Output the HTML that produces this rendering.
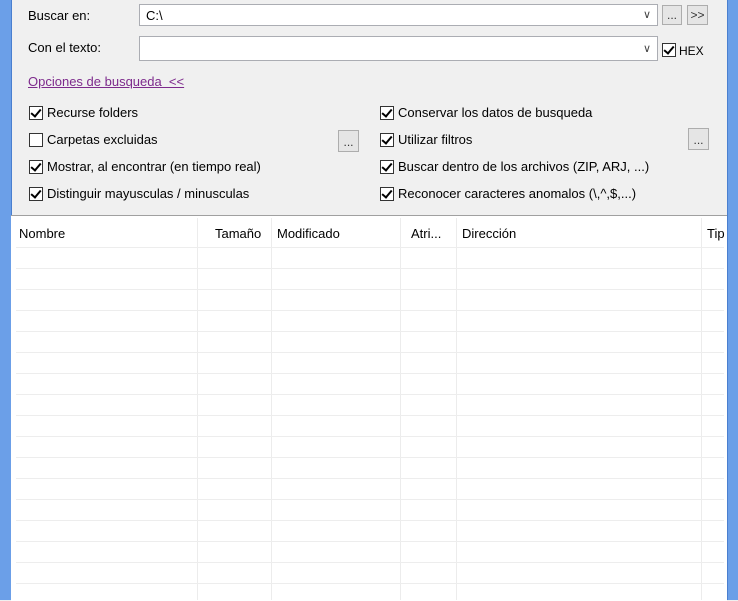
<!DOCTYPE html>
<html><head><style>
body{margin:0;width:738px;height:600px;overflow:hidden;background:#f0f0f0;font-family:"Liberation Sans",Arial,sans-serif;font-size:13px;color:#000;position:relative}
.a{position:absolute}
.lb{left:0;top:0;width:11px;height:600px;background:#6b9fe8;border-right:1px solid #4a7fcf}
.rb{left:727px;top:0;width:11px;height:600px;background:#6b9fe8;border-left:1px solid #4a7fcf}
.inp{background:#fff;border:1px solid #abadb3;height:22px;box-sizing:border-box}
.btn{border:1px solid #adadad;background:#e5e5e5;box-sizing:border-box;font-size:12px;text-align:center;line-height:18px;color:#333}
.cb{width:14px;height:14px;border:1px solid #333;background:#fff;box-sizing:border-box}
.cb.c::after{content:"";position:absolute;left:3px;top:0px;width:4px;height:8px;border:solid #000;border-width:0 2px 2px 0;transform:rotate(40deg)}
.chev{font-size:11px;color:#444}
.hl{height:1px;background:#ededed;left:16px;width:708px}
.vl{width:1px;background:#ececec;top:218px;height:382px}
</style></head><body>
<div class="a lb"></div><div class="a rb"></div>
<div class="a" style="left:28px;top:8px">Buscar en:</div>
<div class="a inp" style="left:139px;top:4px;width:519px;padding:3px 6px">C:\</div>
<div class="a chev" style="left:643px;top:8px">&#8744;</div>
<div class="a btn" style="left:662px;top:5px;width:20px;height:20px">...</div>
<div class="a btn" style="left:687px;top:5px;width:21px;height:20px">&gt;&gt;</div>
<div class="a" style="left:28px;top:40px">Con el texto:</div>
<div class="a inp" style="left:139px;top:36px;width:519px;height:25px"></div>
<div class="a chev" style="left:643px;top:42px">&#8744;</div>
<div class="a cb c" style="left:662px;top:43px"></div>
<div class="a" style="left:679px;top:44px;font-size:12px">HEX</div>
<div class="a" style="left:28px;top:74px;color:#7d2a8c;text-decoration:underline">Opciones de busqueda&nbsp; &lt;&lt;</div>

<div class="a cb c" style="left:29px;top:106px"></div><div class="a" style="left:47px;top:105px">Recurse folders</div>
<div class="a cb" style="left:29px;top:133px"></div><div class="a" style="left:47px;top:132px">Carpetas excluidas</div>
<div class="a cb c" style="left:29px;top:160px"></div><div class="a" style="left:47px;top:159px">Mostrar, al encontrar (en tiempo real)</div>
<div class="a cb c" style="left:29px;top:187px"></div><div class="a" style="left:47px;top:186px">Distinguir mayusculas / minusculas</div>
<div class="a btn" style="left:338px;top:130px;width:21px;height:22px;line-height:22px">...</div>

<div class="a cb c" style="left:380px;top:106px"></div><div class="a" style="left:398px;top:105px">Conservar los datos de busqueda</div>
<div class="a cb c" style="left:380px;top:133px"></div><div class="a" style="left:398px;top:132px">Utilizar filtros</div>
<div class="a cb c" style="left:380px;top:160px"></div><div class="a" style="left:398px;top:159px">Buscar dentro de los archivos (ZIP, ARJ, ...)</div>
<div class="a cb c" style="left:380px;top:187px"></div><div class="a" style="left:398px;top:186px">Reconocer caracteres anomalos (\,^,$,...)</div>
<div class="a btn" style="left:688px;top:128px;width:21px;height:22px;line-height:22px">...</div>

<div class="a" style="left:11px;top:215px;width:716px;height:385px;background:#fff;border-top:1px solid #a0a0a0"></div>
<div class="a vl" style="left:197px"></div><div class="a vl" style="left:271px"></div><div class="a vl" style="left:400px"></div><div class="a vl" style="left:456px"></div><div class="a vl" style="left:701px"></div>
<div class="a" style="left:19px;top:226px;font-size:13px">Nombre</div>
<div class="a" style="left:215px;top:226px">Tamaño</div>
<div class="a" style="left:277px;top:226px">Modificado</div>
<div class="a" style="left:411px;top:226px">Atri...</div>
<div class="a" style="left:462px;top:226px">Dirección</div>
<div class="a" style="left:707px;top:226px">Tip</div>
<div class="a hl" style="top:247px"></div><div class="a hl" style="top:268px"></div><div class="a hl" style="top:289px"></div><div class="a hl" style="top:310px"></div><div class="a hl" style="top:331px"></div><div class="a hl" style="top:352px"></div><div class="a hl" style="top:373px"></div><div class="a hl" style="top:394px"></div><div class="a hl" style="top:415px"></div><div class="a hl" style="top:436px"></div><div class="a hl" style="top:457px"></div><div class="a hl" style="top:478px"></div><div class="a hl" style="top:499px"></div><div class="a hl" style="top:520px"></div><div class="a hl" style="top:541px"></div><div class="a hl" style="top:562px"></div><div class="a hl" style="top:583px"></div>
</body></html>
